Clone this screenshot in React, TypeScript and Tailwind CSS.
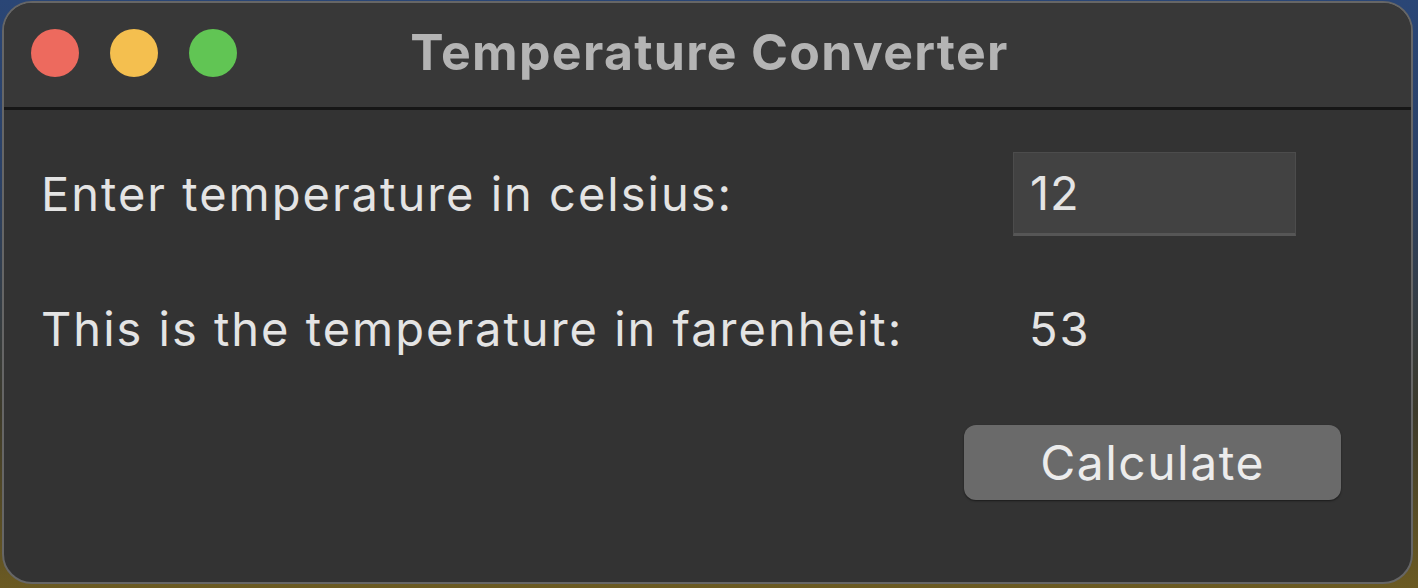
import React from "react";

export default function App() {
  return (
    <div
      className="w-[1418px] h-[588px] overflow-hidden"
      style={{
        background:
          "linear-gradient(180deg, #2a4676 0%, #2b4166 30%, #3d3a2a 70%, #6b5a22 100%)",
        fontFamily: "Inter, 'Noto Sans', 'Liberation Sans', sans-serif",
      }}
    >
      <div className="ml-[2px] mt-[1px] w-[1411px] h-[583px] rounded-[30px] border-2 border-[#666666] bg-[#333333] overflow-hidden flex flex-col">
        {/* Title bar */}
        <div className="relative h-[107px] shrink-0 bg-[#383838] border-b-[3px] border-[#161616] flex items-center pl-[27px]">
          <div className="flex gap-[31px] -mt-[4px]">
            <span className="block w-[48px] h-[48px] rounded-full bg-[#ed6a5e]" />
            <span className="block w-[48px] h-[48px] rounded-full bg-[#f4bf4f]" />
            <span className="block w-[48px] h-[48px] rounded-full bg-[#61c554]" />
          </div>
          <div className="absolute inset-0 flex items-center justify-center -mt-[6px] pointer-events-none">
            <span className="text-[50px] font-bold text-[#b4b4b4] tracking-[1.3px] pl-[4px]">
              Temperature Converter
            </span>
          </div>
        </div>

        {/* Content */}
        <div className="flex-1 flex flex-col pl-[37px] pr-[70px] pt-[42px] text-[#e4e4e4]">
          <div className="flex items-center h-[84px]">
            <span className="w-[972px] text-[47px] tracking-[2px]">
              Enter temperature in celsius:
            </span>
            <div className="w-[283px] h-[84px] bg-[#424242] border border-[#4c4c4c] border-b-[3px] border-b-[#565656] flex items-center pl-[16px] text-[47px] tracking-[1px]">
              12
            </div>
          </div>
          <div className="flex items-center h-[84px] mt-[51px]">
            <span className="w-[988px] text-[47px] tracking-[2px]">
              This is the temperature in farenheit:
            </span>
            <span className="text-[47px] tracking-[2px]">53</span>
          </div>
          <div className="flex justify-end mt-[54px]">
            <button className="w-[377px] h-[75px] rounded-[12px] bg-[#6a6a6a] text-[#ececec] text-[48px] tracking-[1.5px] shadow-[0_1px_2px_rgba(0,0,0,0.5)] flex items-center justify-center">
              Calculate
            </button>
          </div>
        </div>
      </div>
    </div>
  );
}
